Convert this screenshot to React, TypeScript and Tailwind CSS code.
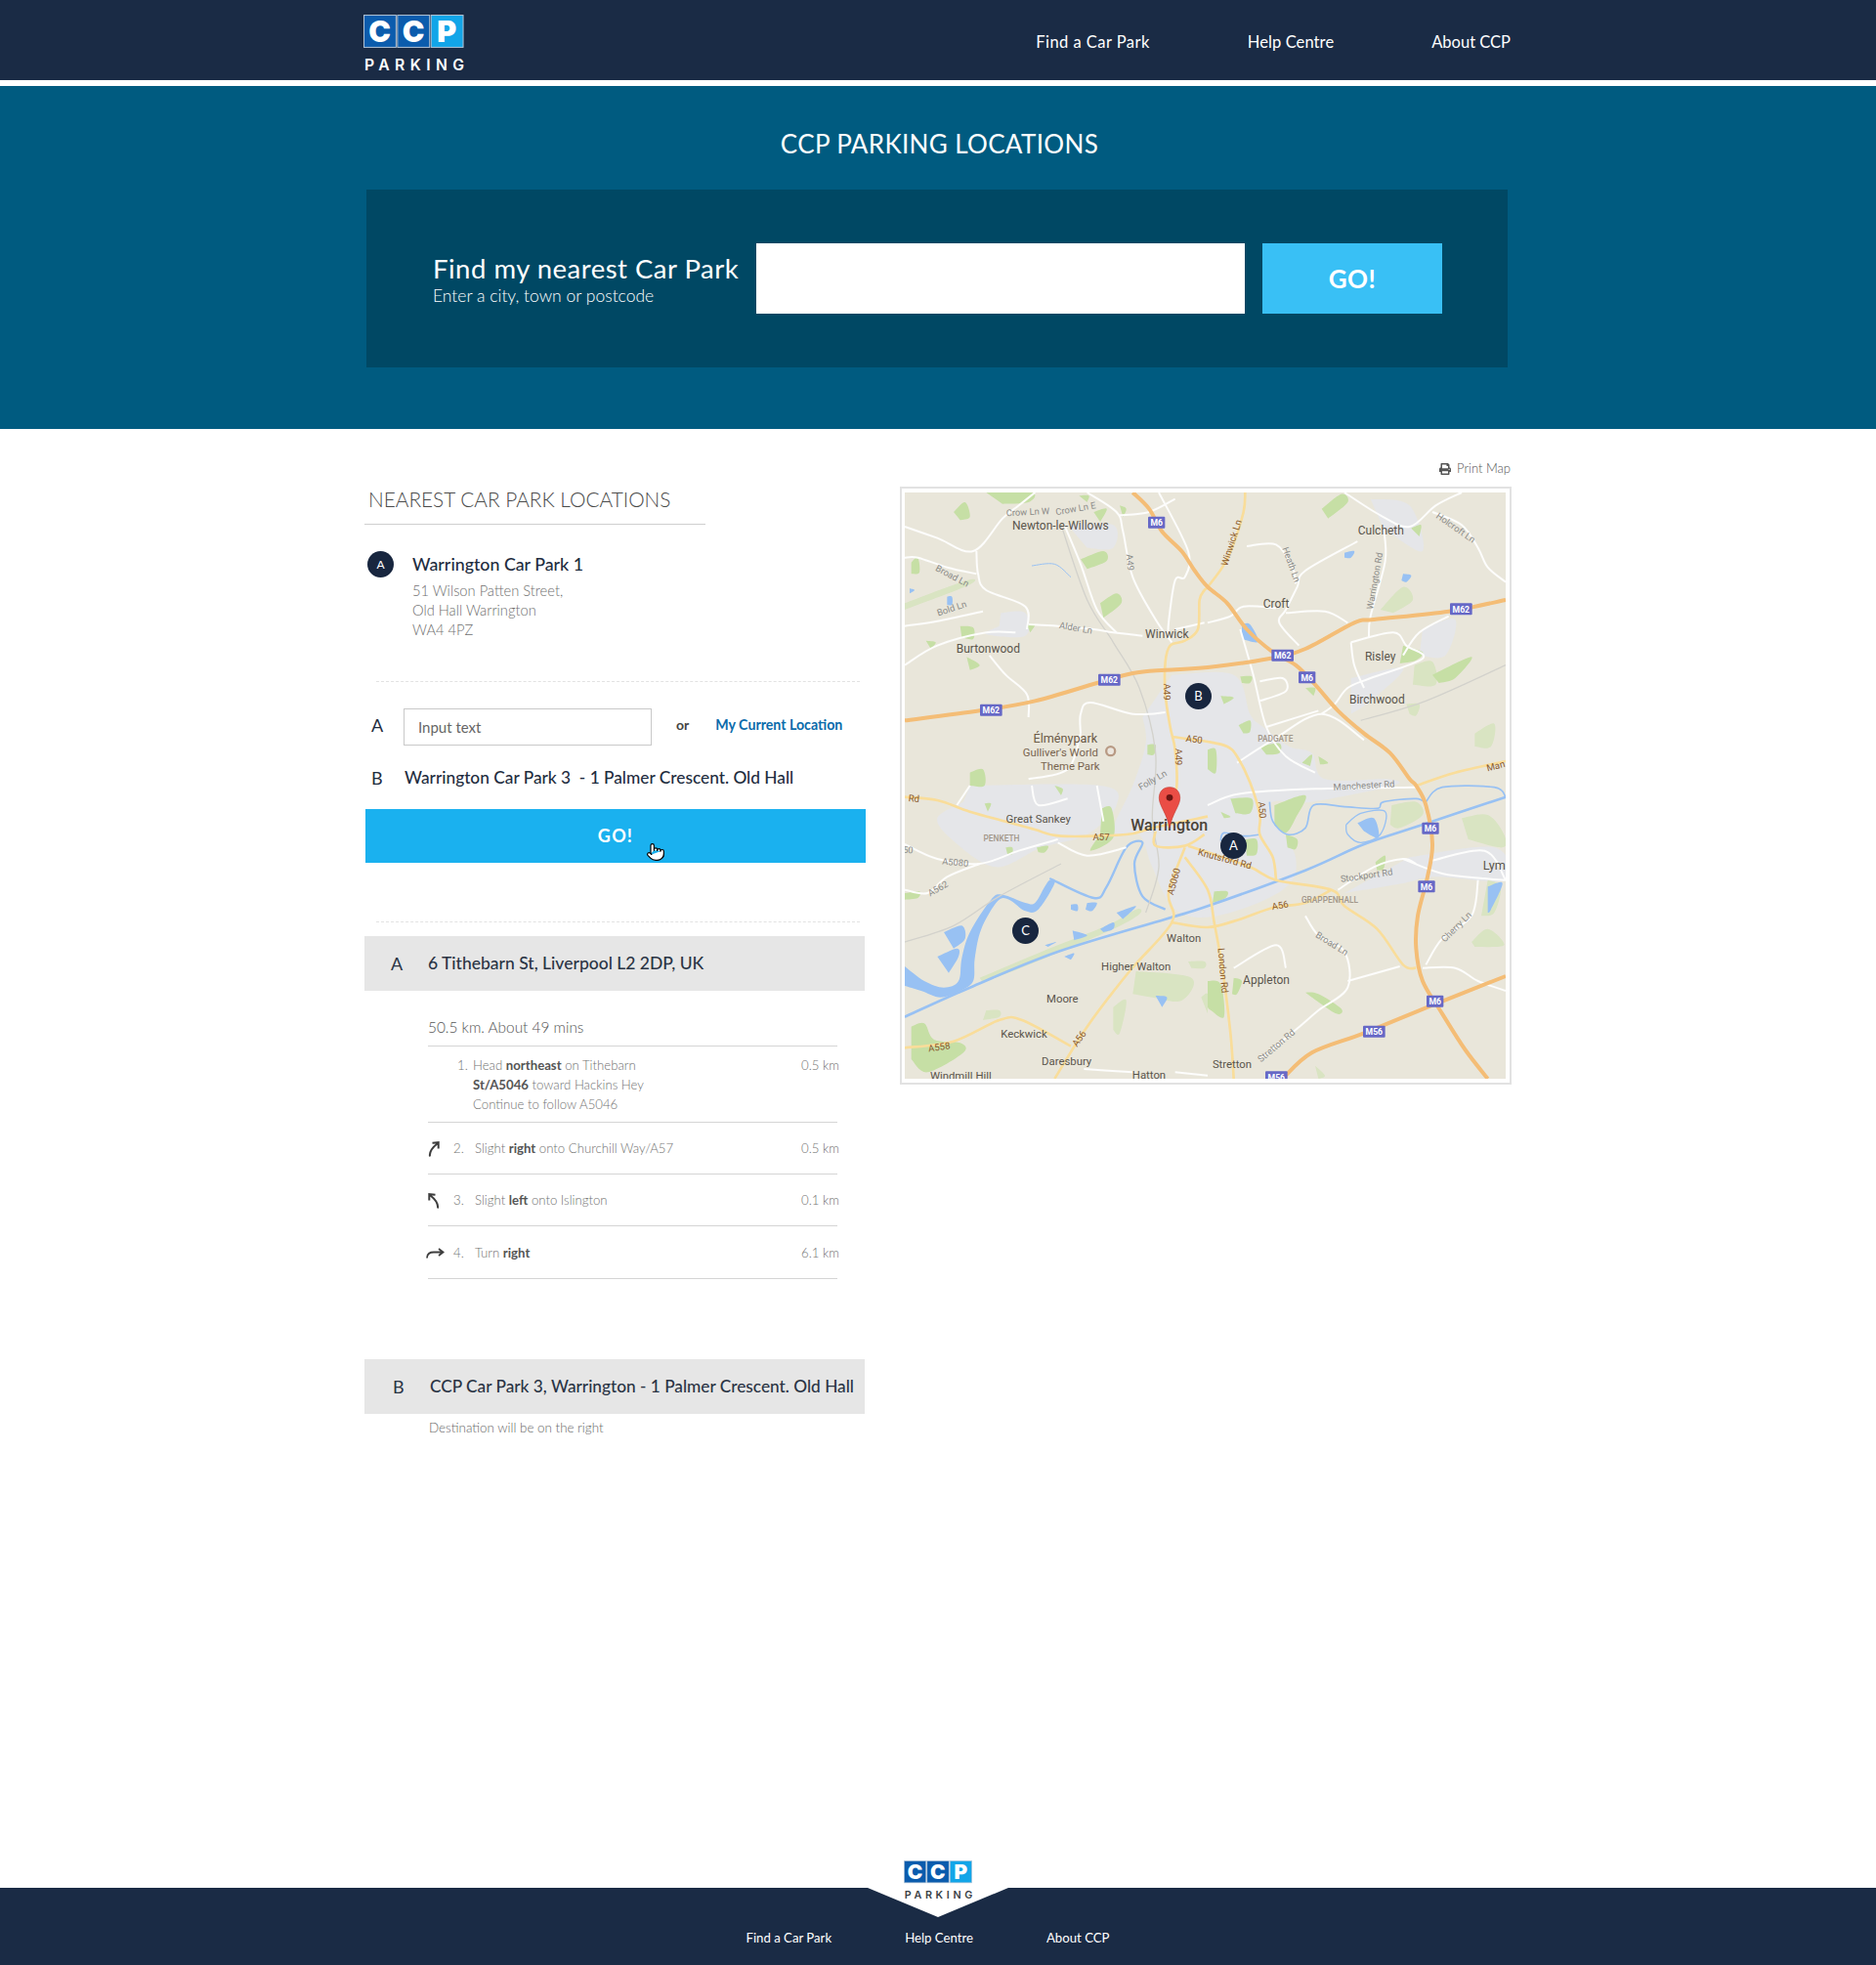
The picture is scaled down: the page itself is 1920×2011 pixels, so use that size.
import { FaPrint } from "react-icons/fa";
import { Pointer } from "lucide-react";

const sans = "font-['Lato',_'Open_Sans',_sans-serif]";

function Logo({ dark, className }: { dark?: boolean; className: string }) {
    const boxes = [
        { x: 0, letter: "C", fill: "#0b5cad" },
        { x: 35, letter: "C", fill: "#0b5cad" },
        { x: 70, letter: "P", fill: "#12a5e8" },
    ];
    return (
        <svg viewBox="0 -6 106 70" className={className}>
            {boxes.map((b) => (
                <g key={b.x}>
                    <rect x={b.x + 0.5} y="0.5" width="33.5" height="33.5" fill={b.fill} stroke="#b5c6d8" />
                    <text
                        x={b.x + 17}
                        y="28.5"
                        textAnchor="middle"
                        fontFamily="Inter, Lato, sans-serif"
                        fontWeight="900"
                        fontSize="31"
                        fill="#fff"
                    >
                        {b.letter}
                    </text>
                </g>
            ))}
            <text
                x="1"
                y="58"
                fontFamily="Inter, Lato, sans-serif"
                fontWeight="600"
                fontSize="16"
                textLength="104"
                fill={dark ? "#3a3f45" : "#fff"}
            >
                PARKING
            </text>
        </svg>
    );
}

// map data is traced at 3x, one list per quarter of the map
const quarters = [
    [0, 0],
    [930, 0],
    [0, 900],
    [930, 900],
];

function pointsOf(s: string, ox = 0, oy = 0) {
    const n = s.trim().split(/\s+/).map(Number);
    const pts: [number, number][] = [];
    for (let i = 0; i < n.length; i += 2) pts.push([n[i] + ox, n[i + 1] + oy]);
    return pts;
}

// catmull-rom through the points, so roads don't look like polylines
function smooth(pts: [number, number][]) {
    let d = `M${pts[0][0]} ${pts[0][1]}`;
    for (let i = 0; i < pts.length - 1; i++) {
        const p0 = pts[i - 1] ?? pts[i];
        const p1 = pts[i];
        const p2 = pts[i + 1];
        const p3 = pts[i + 2] ?? p2;
        const c1x = p1[0] + (p2[0] - p0[0]) / 6;
        const c1y = p1[1] + (p2[1] - p0[1]) / 6;
        const c2x = p2[0] - (p3[0] - p1[0]) / 6;
        const c2y = p2[1] - (p3[1] - p1[1]) / 6;
        d += ` C${c1x} ${c1y} ${c2x} ${c2y} ${p2[0]} ${p2[1]}`;
    }
    return d;
}

function blobs(list: string[][]) {
    return list.flatMap((q, i) =>
        q.map((s) => `${smooth(pointsOf(s, quarters[i][0], quarters[i][1]))} Z`)
    );
}

function lines(list: string[][]) {
    return list.flatMap((q, i) => q.map((s) => smooth(pointsOf(s, quarters[i][0], quarters[i][1]))));
}

const motorways = [
    "700 0 750 50 790 120 850 180 890 240 930 290 990 340 1050 420 1130 490 1200 530 1260 590 1330 670 1410 740 1490 800 1550 880 1570 900 1600 960 1620 1080 1605 1180 1575 1300 1570 1400 1590 1500 1650 1600 1720 1710 1790 1800",
    "0 700 230 670 400 640 590 585 700 555 800 545 930 537 1120 510 1230 480 1380 400 1440 390 1670 365 1845 330",
    "1160 1800 1250 1720 1410 1660 1630 1570 1845 1485",
];

const aRoads = [
    "1045 0 1040 60 1005 170 975 230 930 290 920 300 905 330 900 420 860 455 815 470 800 520 800 620 815 720 830 790 835 900 815 1010",
    "820 750 930 765 990 780 1020 810 1060 890 1090 990 1090 1050 1130 1120 1140 1190",
    "0 935 100 945 200 980 310 1010 400 1035 480 1055 680 1050 760 1030 930 995",
    "770 1040 770 1085 860 1085 920 1050",
    "870 1085 930 1105 1060 1150 1140 1190 1310 1220 1350 1270 1450 1340 1530 1450 1570 1460",
    "860 1090 810 1230 820 1320 690 1470 560 1640 460 1800",
    "860 1120 930 1220 950 1320 975 1460 1000 1660 1010 1800",
    "820 1320 930 1335 1030 1310 1130 1275 1230 1260 1310 1220",
    "0 1705 150 1685 290 1620 360 1620 510 1700",
    "1570 900 1690 860 1845 825",
];

const whiteRoads = [
    [
        "0 105 100 140 210 180 300 80 350 40 400 0",
        "220 180 225 250 250 300 370 350 375 420",
        "380 405 470 410 580 420 640 430 730 440",
        "0 410 100 395 240 365",
        "0 200 40 200 130 230 220 250",
        "0 530 100 470 250 430 340 430",
        "260 500 310 560 375 620 380 690",
        "560 0 650 60 670 120 700 260 770 390 820 460",
        "490 100 540 220 590 360 650 430",
        "660 70 750 60 830 20",
        "780 0 870 180 860 260 830 270 810 400 810 450",
        "540 740 540 680 570 645 700 680 800 675",
        "380 880 500 850 540 740",
        "920 400 830 420",
    ],
    [
        "420 0 530 70 620 105 700 40 780 0",
        "690 60 780 100 830 170 860 230 915 275",
        "540 110 545 210 500 380 495 445",
        "460 150 300 240 275 290 240 360 220 400 280 470",
        "0 400 70 380 110 350 210 355",
        "120 165 210 160 260 230 270 280",
        "240 370 360 365 430 400",
        "440 460 570 430 610 470 660 510 500 570 430 600 390 650 350 680",
        "440 460 450 530 480 600",
        "600 500 650 430 740 380",
        "100 420 140 560 180 720 240 810 330 860",
        "90 830 200 760 350 680 480 760",
        "180 720 340 670",
        "160 580 230 570 240 610 160 640",
    ],
    [
        "0 180 100 225 230 240 350 200 470 165",
        "0 320 70 330 130 280 230 240",
        "470 175 560 215 680 190",
        "390 0 410 60 500 40",
        "590 0 610 110",
        "160 60 200 0",
        "550 870 700 880",
        "830 880 930 890",
    ],
    [
        "0 60 100 25 330 10 640 5",
        "640 240 600 225 510 250 400 320",
        "600 225 720 270 850 285 915 290",
        "690 230 850 200 915 290",
        "300 400 340 460 420 510 430 620 340 690 270 750 160 840",
        "430 600 590 555",
        "660 560 760 560 830 600 915 630",
        "670 550 720 470 810 400 830 290",
        "80 560 210 490 240 560",
    ],
];

const greens = [
    [
        "250 0 390 0 380 30 300 35",
        "150 60 185 30 200 75 170 85",
        "20 215 40 200 45 245 20 250",
        "540 205 610 180 620 210 560 235",
        "600 340 650 310 665 340 610 385",
        "375 405 400 405 385 430",
        "170 410 210 415 210 450 175 445",
        "65 455 95 460 80 480",
        "190 505 230 530 200 545",
        "200 860 240 850 245 900 200 900",
        "745 775 770 775 765 805 745 805",
        "660 40 680 50 670 75",
        "535 10 565 10 560 30",
        "580 60 620 50 600 90",
    ],
    [
        "350 50 410 5 430 30 370 80",
        "625 110 655 100 650 135",
        "690 560 810 505 760 570 710 585",
        "600 470 660 490 640 515 590 525",
        "100 565 135 565 130 585 105 585",
        "40 625 80 630 50 650",
        "95 715 130 700 130 735 110 740",
        "0 790 25 790 25 860 0 850",
        "160 780 220 770 220 800 180 805",
        "290 830 320 805 315 840",
        "340 810 370 830 345 835",
        "300 600 330 600 325 625",
    ],
    [
        "605 70 635 70 640 160 570 200 600 150",
        "0 330 45 325 40 345 0 350",
        "405 190 440 185 430 205 410 205",
        "310 190 330 190 330 210 315 210",
        "245 55 265 55 255 80",
        "460 0 485 10 480 30",
        "20 740 60 730 90 780 170 790 180 820 70 880 20 840",
    ],
    [
        "205 60 300 30 270 100 240 145 205 120",
        "240 150 275 165 270 195 245 190",
        "115 165 150 165 150 210 120 215",
        "70 40 135 40 130 85 85 85",
        "40 80 70 95 50 100",
        "20 325 60 325 55 345 15 360",
        "515 235 545 215 540 255 520 260",
        "0 600 40 610 50 710 10 690 0 680",
        "80 590 105 600 90 640 75 640",
        "300 635 340 640 410 685 395 700 320 650",
    ],
];

const paleGreens = [
    ["0 340 190 270 195 285 0 360"],
    [
        "635 530 690 520 700 590 630 590",
        "530 360 600 290 630 330 570 370",
        "820 740 880 710 870 780 820 780",
        "610 650 650 650 640 685 620 680",
    ],
    [
        "230 590 420 510 620 430 710 380 720 395 630 445 430 530 240 605",
        "710 570 880 590 850 660 760 650 700 640",
        "910 650 930 640 930 700",
        "250 690 290 690 290 710 240 720",
        "640 680 680 660 660 760 640 750",
        "870 540 920 540 920 560 880 560",
    ],
    [
        "565 60 640 50 660 90 590 130 560 120",
        "780 100 860 90 910 150 905 190 800 165",
        "810 480 860 440 910 490 820 495",
        "860 290 900 310 880 390 840 400",
        "330 860 360 890 340 900",
    ],
];

const urban = [
    "820 560 1010 560 1060 680 1100 720 1180 780 1250 800 1290 880 1480 880 1500 900 1250 950 1120 960 1200 1120 1160 1220 960 1300 830 1280 760 1150 720 1050 640 1040 700 900 740 770 730 690",
    "295 370 370 370 370 440 250 435 290 410",
    "200 900 600 900 650 960 560 1050 420 1090 280 1150 150 1070 100 1000 180 950",
    "500 100 640 100 640 170 560 170",
    "1430 20 1550 40 1590 180 1470 110",
    "1370 570 1530 540 1430 640 1370 680",
    "1590 420 1690 390 1660 500 1580 500",
    "1550 1120 1810 1090 1845 1190 1630 1180 1530 1200 1350 1230",
];

const lakes = [
    "120 1350 175 1330 185 1370 150 1400",
    "100 1425 160 1400 165 1425 135 1475",
    "510 1265 530 1265 530 1285 510 1280",
    "560 1260 590 1260 575 1285 555 1280",
    "515 1345 560 1360 520 1375",
    "600 1340 640 1320 640 1340 610 1350",
    "650 1290 710 1270 670 1310",
    "430 1390 465 1380 440 1395",
    "490 1425 520 1415 510 1435",
    "770 1545 805 1550 790 1580",
    "1390 1015 1440 1000 1455 1060 1410 1040",
    "1035 405 1060 405 1085 458 1035 450",
    "1350 185 1380 180 1370 200 1350 200",
    "1530 250 1555 255 1540 275 1525 270",
    "15 295 30 300 15 310",
    "130 320 145 320 145 345 130 345",
    "1790 1210 1835 1200 1800 1280 1790 1290",
    "0 1455 60 1500 120 1520 165 1500 175 1430 200 1350 265 1250 300 1235 370 1260 400 1260 430 1210 445 1190 460 1200 410 1280 370 1285 320 1250 285 1255 235 1340 215 1430 210 1500 170 1530 110 1550 50 1530 0 1515",
];

const waterLines: [string, number][] = [
    ["0 1610 200 1520 470 1410 800 1310 930 1270 1230 1160 1410 1080 1590 1020 1845 935", 8],
    ["445 1185 580 1245 620 1210 680 1090 730 1075 705 1140 730 1240 800 1280", 7],
    ["1120 950 1130 1010 1175 1050 1230 1030 1255 960 1350 965 1450 970 1470 950 1570 940 1600 955", 5],
    ["1600 950 1650 905 1810 905 1845 935", 5],
    ["1355 1020 1400 985 1475 980 1460 1050 1400 1075 1360 1050 1355 1020", 4],
    ["1090 1050 1040 1055 980 1045 970 1070", 5],
    ["390 225 460 220 510 260", 3],
];

const shields = [
    { x: 773, y: 92, t: "M6" },
    { x: 628, y: 575, t: "M62" },
    { x: 265, y: 668, t: "M62" },
    { x: 1160, y: 500, t: "M62" },
    { x: 1235, y: 568, t: "M6" },
    { x: 1708, y: 358, t: "M62" },
    { x: 1614, y: 1031, t: "M6" },
    { x: 1602, y: 1210, t: "M6" },
    { x: 1628, y: 1562, t: "M6" },
    { x: 1441, y: 1655, t: "M56" },
    { x: 1141, y: 1795, t: "M56" },
];

const places: [number, number, string, number, string?][] = [
    [478, 113, "Newton-le-Willows", 36],
    [1462, 130, "Culcheth", 36],
    [1140, 355, "Croft", 36],
    [805, 447, "Winwick", 36],
    [256, 492, "Burtonwood", 36],
    [1460, 517, "Risley", 36],
    [1450, 648, "Birchwood", 36],
    [493, 768, "Élménypark", 38, "#6b5a48"],
    [478, 810, "Gulliver's World", 34, "#78644f"],
    [508, 852, "Theme Park", 34, "#78644f"],
    [410, 1013, "Great Sankey", 34],
    [857, 1380, "Walton", 34],
    [710, 1468, "Higher Walton", 34],
    [484, 1567, "Moore", 34],
    [366, 1673, "Keckwick", 34],
    [497, 1758, "Daresbury", 34],
    [172, 1803, "Windmill Hill", 34],
    [750, 1800, "Hatton", 34],
    [1110, 1510, "Appleton", 36],
    [1005, 1767, "Stretton", 34],
    [1810, 1157, "Lym", 38],
];

const roadLabels: [number, number, string, number, number?][] = [
    [378, 62, "Crow Ln W", -3],
    [525, 52, "Crow Ln E", -10],
    [145, 258, "Broad Ln", 28],
    [145, 358, "Bold Ln", -18],
    [525, 418, "Alder Ln", 10],
    [690, 215, "A49", 85],
    [762, 885, "Folly Ln", -30],
    [1690, 110, "Holcroft Ln", 35],
    [1185, 222, "Heath Ln", 70],
    [1445, 272, "Warrington Rd", -80],
    [1410, 902, "Manchester Rd", -3],
    [10, 1100, "50", 5],
    [155, 1138, "A5080", 5],
    [103, 1218, "A562", -30],
    [1418, 1178, "Stockport Rd", -8],
    [1310, 1387, "Broad Ln", 32],
    [1695, 1335, "Cherry Ln", -45],
    [1142, 1700, "Stretton Rd", -40],
];

const brownLabels: [number, number, string, number][] = [
    [1005, 155, "Winwick Ln", -72],
    [802, 612, "A49", 90],
    [838, 812, "A49", 90],
    [888, 760, "A50", 8],
    [1095, 975, "A50", 85],
    [603, 1060, "A57", 0],
    [28, 942, "Rd", 5],
    [828, 1195, "A5060", -75],
    [982, 1127, "Knutsford Rd", 15],
    [1153, 1270, "A56", -10],
    [975, 1468, "London Rd", 85],
    [537, 1678, "A56", -55],
    [106, 1705, "A558", -8],
    [1815, 842, "Man", -15],
];

const districts: [number, number, string][] = [
    [1138, 765, "PADGATE"],
    [297, 1070, "PENKETH"],
    [1305, 1260, "GRAPPENHALL"],
];

function MapPicture() {
    return (
        <svg viewBox="0 0 1845 1800" className="block h-full w-full bg-[#e9e6da]">
            <defs>
                <filter id="soft" x="0" y="0" width="100%" height="100%">
                    <feGaussianBlur stdDeviation="2.2" />
                </filter>
            </defs>
            <g filter="url(#soft)">
                {urban.map((s) => (
                    <path key={s} d={`${smooth(pointsOf(s))} Z`} fill="#e5e6e9" />
                ))}
                {blobs(paleGreens).map((d) => (
                    <path key={d} d={d} fill="#d9e4c2" />
                ))}
                {blobs(greens).map((d) => (
                    <path key={d} d={d} fill="#c6dfa5" />
                ))}
                {lakes.map((s) => (
                    <path key={s} d={`${smooth(pointsOf(s))} Z`} fill="#98c1f3" />
                ))}
                {waterLines.map(([s, w]) => (
                    <path key={s} d={smooth(pointsOf(s))} fill="none" stroke="#98c1f3" strokeWidth={w} />
                ))}
                <g fill="none" stroke="#d3d2cc" strokeWidth="4">
                    <path d={smooth(pointsOf("480 100 560 330 640 460 720 600 770 800 760 1000 780 1150 740 1290"))} />
                    <path d={smooth(pointsOf("0 1380 150 1330 290 1240 480 1140"))} />
                    <path d={smooth(pointsOf("1400 700 1600 640 1845 530"))} />
                </g>
                <g fill="none" stroke="#fdfdfc" strokeWidth="6">
                    {lines(whiteRoads).map((d) => (
                        <path key={d} d={d} />
                    ))}
                </g>
                <g fill="none" stroke="#f9dd9a" strokeWidth="8">
                    {aRoads.map((s) => (
                        <path key={s} d={smooth(pointsOf(s))} />
                    ))}
                </g>
                <g fill="none" stroke="#f4bd76" strokeWidth="12">
                    {motorways.map((s) => (
                        <path key={s} d={smooth(pointsOf(s))} />
                    ))}
                </g>
            </g>
            <g fontFamily="Roboto, sans-serif">
                {roadLabels.map(([x, y, t, r]) => (
                    <text
                        key={t + x}
                        x={x}
                        y={y}
                        transform={`rotate(${r} ${x} ${y})`}
                        textAnchor="middle"
                        dominantBaseline="middle"
                        fontSize="28"
                        fill="#8b8b88"
                    >
                        {t}
                    </text>
                ))}
                {brownLabels.map(([x, y, t, r]) => (
                    <text
                        key={t + x}
                        x={x}
                        y={y}
                        transform={`rotate(${r} ${x} ${y})`}
                        textAnchor="middle"
                        dominantBaseline="middle"
                        fontSize="29"
                        fill="#8a5a2c"
                    >
                        {t}
                    </text>
                ))}
                {places.map(([x, y, t, s, c]) => (
                    <text key={t} x={x} y={y} textAnchor="middle" fontSize={s} fill={c ?? "#5a554c"}>
                        {t}
                    </text>
                ))}
                {districts.map(([x, y, t]) => (
                    <text key={t} x={x} y={y} textAnchor="middle" fontWeight="500" fontSize="25" fill="#a2978a">
                        {t}
                    </text>
                ))}
                <circle cx="632" cy="794" r="17" fill="#b89a84" />
                <circle cx="632" cy="794" r="10" fill="#ece6de" />
                {shields.map((s) => (
                    <g key={s.x}>
                        <rect
                            x={s.x - (s.t.length === 2 ? 26 : 34)}
                            y={s.y - 18}
                            width={s.t.length === 2 ? 52 : 68}
                            height="36"
                            rx="3"
                            fill="#6668c6"
                        />
                        <text x={s.x} y={s.y + 10} textAnchor="middle" fontWeight="700" fontSize="26" fill="#fff">
                            {s.t}
                        </text>
                    </g>
                ))}
                <text x="812" y="1037" textAnchor="middle" fontWeight="500" fontSize="48" fill="#4a4338">
                    Warrington
                </text>
            </g>
            <path
                d="M813 905 C790 905 781 922 781 938 C781 962 805 985 813 1030 C821 985 845 962 845 938 C845 922 836 905 813 905 Z"
                fill="#ea4d45"
                stroke="#c5392f"
                strokeWidth="2"
            />
            <circle cx="813" cy="937" r="10" fill="#6b1512" />
        </svg>
    );
}

function Pin({ label, className }: { label: string; className: string }) {
    return (
        <div
            className={`absolute flex h-[27px] w-[27px] items-center justify-center rounded-full bg-[#18263f] text-[13px] text-white ${className}`}
        >
            {label}
        </div>
    );
}

function SlightRight({ flip }: { flip?: boolean }) {
    return (
        <svg viewBox="0 0 12 16" className={`h-4 w-3 ${flip ? "-scale-x-100" : ""}`}>
            <path
                d="M2 15.5 C1 10 5 6 10 2 M4.5 1.8 L10.7 1.2 L10.7 7.5"
                fill="none"
                stroke="#3d3d3d"
                strokeWidth="2"
            />
        </svg>
    );
}

function TurnRight() {
    return (
        <svg viewBox="0 0 19 11" className="h-[11px] w-[19px] -translate-x-[2px]">
            <path
                d="M1 10.5 C1 6 4 4.5 8 4.5 L17 4.5 M13 1 L17.5 4.5 L13 8"
                fill="none"
                stroke="#3d3d3d"
                strokeWidth="1.8"
            />
        </svg>
    );
}

function Step({
    n,
    icon,
    dist,
    height,
    children,
}: {
    n: number;
    icon: React.ReactNode;
    dist: string;
    height: string;
    children: React.ReactNode;
}) {
    return (
        <div className={`flex items-center border-b border-[#d5d5d5] pt-[2px] text-[13.2px] font-light text-[#727272] ${height}`}>
            <div className="flex w-[26px] shrink-0 justify-start">{icon}</div>
            <div className="w-[22px] shrink-0">{n}.</div>
            <div className="flex-1">{children}</div>
            <div className="w-[37px] shrink-0 whitespace-nowrap">{dist}</div>
        </div>
    );
}

const B = ({ children }: { children: React.ReactNode }) => (
    <b className="font-bold text-[#555]">{children}</b>
);

export default function App() {
    return (
        <div className={`flex min-h-screen flex-col bg-white ${sans}`}>
            <header className="h-[88px] border-b-[6px] border-white bg-[#1a2b45]">
                <div className="mx-auto flex h-full w-[1174px] justify-between">
                    <Logo className="-ml-px mt-[9px] h-[69px] w-[104px]" />
                    <nav className="mr-[1px] flex gap-[100px] pt-[33px] text-[16.5px] leading-5 text-white">
                        <a className="tracking-[0.45px]">Find a Car Park</a>
                        <a className="tracking-[0.1px]">Help Centre</a>
                        <a>About CCP</a>
                    </nav>
                </div>
            </header>

            <section className="h-[351px] bg-[#005b80] pt-[41px]">
                <h1 className="pl-[3px] text-center text-[26px] leading-9 tracking-[0.35px] text-white">
                    CCP PARKING LOCATIONS
                </h1>
                <div className="ml-[375px] mt-[29px] flex h-[182px] w-[1168px] items-center bg-[#004864] pl-[68px]">
                    <div className="w-[331px] pt-[3px] text-white">
                        <div className="text-[27.5px] leading-8 tracking-[0.5px]">Find my nearest Car Park</div>
                        <div className="text-[17.5px] font-light leading-6">Enter a city, town or postcode</div>
                    </div>
                    <input className="h-[72px] w-[500px] bg-white" />
                    <button className="ml-[18px] h-[72px] w-[184px] bg-[#39c0f5] text-[26px] font-bold tracking-[0.5px] text-white">
                        GO!
                    </button>
                </div>
            </section>

            <main className="mx-auto flex w-[1174px] flex-1 gap-[35px]">
                <div className="w-[513px]">
                    <div className="w-[349px] border-b border-[#cfcfcf] pb-[13px] pl-[4px] pt-[60px] text-[20.8px] font-light leading-6 text-[#4a4a4a]">
                        NEAREST CAR PARK LOCATIONS
                    </div>

                    <div className="mt-[27px] flex pl-[3px]">
                        <div className="flex h-[27px] w-[27px] items-center justify-center rounded-full bg-[#18263f] text-[12px] text-white">
                            A
                        </div>
                        <div className="ml-[19px]">
                            <div className="text-[17.8px] font-medium leading-[27px] text-[#1f2d40]">Warrington Car Park 1</div>
                            <div className="mt-[3px] text-[14.7px] font-light leading-5 text-[#6f6f6f]">
                                51 Wilson Patten Street,
                                <br />
                                Old Hall Warrington
                                <br />
                                WA4 4PZ
                            </div>
                        </div>
                    </div>

                    <div className="ml-[12px] mt-[43px] w-[495px] border-t border-dashed border-[#e2e2e2]" />

                    <div className="mt-[27px] flex h-[38px] items-center pl-[7px]">
                        <span className="w-[33px] pb-[3px] text-[18px] text-[#1f2d40]">A</span>
                        <input
                            placeholder="Input text"
                            className="h-[38px] w-[254px] border border-[#c9c9c9] px-[14px] text-[15px] placeholder:text-[#666]"
                        />
                        <span className="ml-[25px] pb-[5px] text-[14px] font-bold text-[#444]">or</span>
                        <a className="ml-[27px] pb-[5px] text-[14.2px] font-bold text-[#0b6bab]">My Current Location</a>
                    </div>

                    <div className="mt-[19px] flex h-[28px] items-center pl-[7px] text-[#1f2d40]">
                        <span className="w-[34px] text-[18px]">B</span>
                        <span className="text-[17.3px] font-medium">Warrington Car Park 3&nbsp; - 1 Palmer Crescent. Old Hall</span>
                    </div>

                    <div className="relative ml-px mt-[18px]">
                        <button className="block h-[55px] w-[512px] bg-[#1ab1ef] text-[18px] font-bold tracking-[1.2px] text-white">
                            GO!
                        </button>
                        <Pointer className="absolute left-[287px] top-[33px] h-[22px] w-[20px] fill-white text-black" strokeWidth={1.4} />
                    </div>

                    <div className="ml-[12px] mt-[60px] w-[495px] border-t border-dashed border-[#e2e2e2]" />

                    <div className="mt-[14px] flex h-[56px] w-[512px] items-center bg-[#e6e6e6] pt-[1px] text-[#2a3444]">
                        <span className="w-[65px] pl-[27px] text-[18px]">A</span>
                        <span className="text-[17.5px] font-medium">6 Tithebarn St, Liverpool L2 2DP, UK</span>
                    </div>

                    <div className="ml-[65px] w-[419px]">
                        <div className="flex h-[57px] items-end border-b border-[#d5d5d5] pb-[7px] text-[15.4px] font-light text-[#555]">
                            50.5 km. About 49 mins
                        </div>
                        <div className="flex h-[78px] items-center border-b border-[#d5d5d5] text-[13.2px] font-light leading-5 text-[#727272]">
                            <span className="w-[46px] shrink-0 self-start pl-[30px] pt-[9px]">1.</span>
                            <div className="flex-1">
                                Head <B>northeast</B> on Tithebarn
                                <br />
                                <B>St/A5046</B> toward Hackins Hey
                                <br />
                                Continue to follow A5046
                            </div>
                            <span className="w-[37px] shrink-0 self-start whitespace-nowrap pt-[9px]">0.5 km</span>
                        </div>
                        <Step n={2} height="h-[53px]" icon={<SlightRight />} dist="0.5 km">
                            Slight <B>right</B> onto Churchill Way/A57
                        </Step>
                        <Step n={3} height="h-[53px]" icon={<SlightRight flip />} dist="0.1 km">
                            Slight <B>left</B> onto Islington
                        </Step>
                        <Step n={4} height="h-[54px]" icon={<TurnRight />} dist="6.1 km">
                            Turn <B>right</B>
                        </Step>
                    </div>

                    <div className="mt-[82px] flex h-[56px] w-[512px] items-center bg-[#e6e6e6] text-[#2a3444]">
                        <span className="w-[67px] pl-[29px] text-[18px]">B</span>
                        <span className="text-[17.25px] font-medium">CCP Car Park 3, Warrington - 1 Palmer Crescent. Old Hall</span>
                    </div>
                    <div className="ml-[66px] mt-[4px] text-[13.4px] font-light leading-5 text-[#666]">
                        Destination will be on the right
                    </div>
                </div>

                <div className="w-[626px]">
                    <div className="flex h-[59px] items-center justify-end gap-[6px] pr-[1px] pt-[23px] text-[13px] font-light text-[#555]">
                        <FaPrint className="h-[12px] w-[12px] text-[#555]" />
                        Print Map
                    </div>
                    <div className="h-[612px] border-2 border-[#e2e2e2] pb-[4px] pl-[3px] pr-[4px] pt-[4px]">
                        <div className="relative h-[600px] w-[615px] overflow-hidden">
                            <MapPicture />
                            <Pin label="A" className="left-[323px] top-[348px]" />
                            <Pin label="B" className="left-[287px] top-[195px]" />
                            <Pin label="C" className="left-[110px] top-[435px]" />
                        </div>
                    </div>
                </div>
            </main>

            <footer className="relative h-[79px] bg-[#1a2b45]">
                <div className="absolute left-[888px] top-0 h-[30px] w-[144px] bg-white [clip-path:polygon(0_0,100%_0,50%_100%)]" />
                <Logo dark className="absolute left-[925px] top-[-32px] h-[47px] w-[71px]" />
                <nav className="flex justify-center gap-[75px] pr-[21px] pt-[41px] text-[13.2px] leading-5 text-white">
                    <a>Find a Car Park</a>
                    <a>Help Centre</a>
                    <a>About CCP</a>
                </nav>
            </footer>
        </div>
    );
}
